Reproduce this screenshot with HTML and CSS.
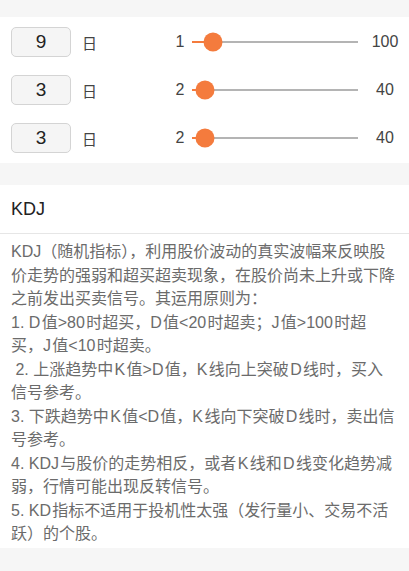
FILE: index.html
```html
<!DOCTYPE html>
<html lang="zh-CN">
<head>
<meta charset="utf-8">
<title>KDJ</title>
<link rel="stylesheet" href="styles.css">
</head>
<body>
<div class="page">
  <section class="panel params">
    <div class="row">
      <div class="box">9</div>
      <span class="unit">日</span>
      <span class="min">1</span>
      <div class="track"><div class="fill" style="width: calc(9.5px + 0.0808 * (100% - 19px))"></div><div class="thumb" style="left: calc(9.5px + 0.0808 * (100% - 19px))"></div></div>
      <span class="max">100</span>
    </div>
    <div class="row">
      <div class="box">3</div>
      <span class="unit">日</span>
      <span class="min">2</span>
      <div class="track"><div class="fill" style="width: calc(9.5px + 0.0263 * (100% - 19px))"></div><div class="thumb" style="left: calc(9.5px + 0.0263 * (100% - 19px))"></div></div>
      <span class="max">40</span>
    </div>
    <div class="row">
      <div class="box">3</div>
      <span class="unit">日</span>
      <span class="min">2</span>
      <div class="track"><div class="fill" style="width: calc(9.5px + 0.0263 * (100% - 19px))"></div><div class="thumb" style="left: calc(9.5px + 0.0263 * (100% - 19px))"></div></div>
      <span class="max">40</span>
    </div>
  </section>
  <section class="panel info">
    <h2 class="title">KDJ</h2>
    <p class="desc">KDJ（随机指标），利用股价波动的真实波幅来反映股<br>价走势的强弱和超买超卖现象，在股价尚未上升或下降<br>之前发出买卖信号。其运用原则为：<br>1. D&#8202;值&gt;80&#8202;时超买，D&#8202;值&lt;20&#8202;时超卖；J&#8202;值&gt;100&#8202;时超<br>买，J&#8202;值&lt;10&#8202;时超卖。<br>&nbsp;2. 上涨趋势中&#8202;K&#8202;值&gt;D&#8202;值，K&#8202;线向上突破&#8202;D&#8202;线时，买入<br>信号参考。<br>3. 下跌趋势中&#8202;K&#8202;值&lt;D&#8202;值，K&#8202;线向下突破&#8202;D&#8202;线时，卖出信<br>号参考。<br>4. KDJ&#8202;与股价的走势相反，或者&#8202;K&#8202;线和&#8202;D&#8202;线变化趋势减<br>弱，行情可能出现反转信号。<br>5. KD&#8202;指标不适用于投机性太强（发行量小、交易不活<br>跃）的个股。</p>
  </section>
</div>
</body>
</html>
```
FILE: styles.css
```css
html, body {
  margin: 0;
  padding: 0;
  background: #f6f6f6;
}
body {
  font-family: "Liberation Sans", "Noto Sans CJK SC", sans-serif;
  color: #333;
}
.page {
  display: flex;
  flex-direction: column;
  gap: 22px;
  padding-top: 17px;
  padding-bottom: 26px;
}
.panel {
  background: #fff;
}
.params {
  display: flex;
  flex-direction: column;
  gap: 18px;
  padding: 10px 10px 10px 11px;
}
.row {
  display: flex;
  align-items: center;
  height: 30px;
}
.box {
  width: 58px;
  height: 28px;
  border: 1px solid #d4d4d4;
  border-radius: 5px;
  background: #f5f5f5;
  display: flex;
  align-items: center;
  justify-content: center;
  font-size: 19px;
  color: #222;
}
.unit {
  width: 88px;
  margin-left: 11px;
  font-family: "Noto Sans CJK SC", sans-serif;
  font-size: 15px;
  line-height: 1;
  color: #444;
}
.min {
  width: 20px;
  text-align: center;
  font-size: 16px;
  color: #444;
}
.track {
  position: relative;
  flex: 1;
  height: 2px;
  margin-left: 2px;
  background: #b4b4b4;
}
.fill {
  position: absolute;
  left: 0;
  top: 0;
  height: 2px;
  background: #f47b3d;
}
.thumb {
  position: absolute;
  top: 1px;
  width: 19px;
  height: 19px;
  border-radius: 50%;
  background: #f47b3d;
  transform: translate(-50%, -50%);
}
.max {
  width: 28px;
  margin-left: 13px;
  text-align: center;
  font-size: 16px;
  color: #444;
}
.title {
  margin: 0;
  height: 48px;
  display: flex;
  align-items: center;
  padding: 0 11px;
  font-size: 18px;
  font-weight: normal;
  color: #222;
  border-bottom: 1px solid #e6e6e6;
}
.desc {
  margin: 0;
  padding: 6px 11px 2px;
  font-size: 16px;
  line-height: 23.5px;
  white-space: nowrap;
  color: #6b6b6b;
}
```
